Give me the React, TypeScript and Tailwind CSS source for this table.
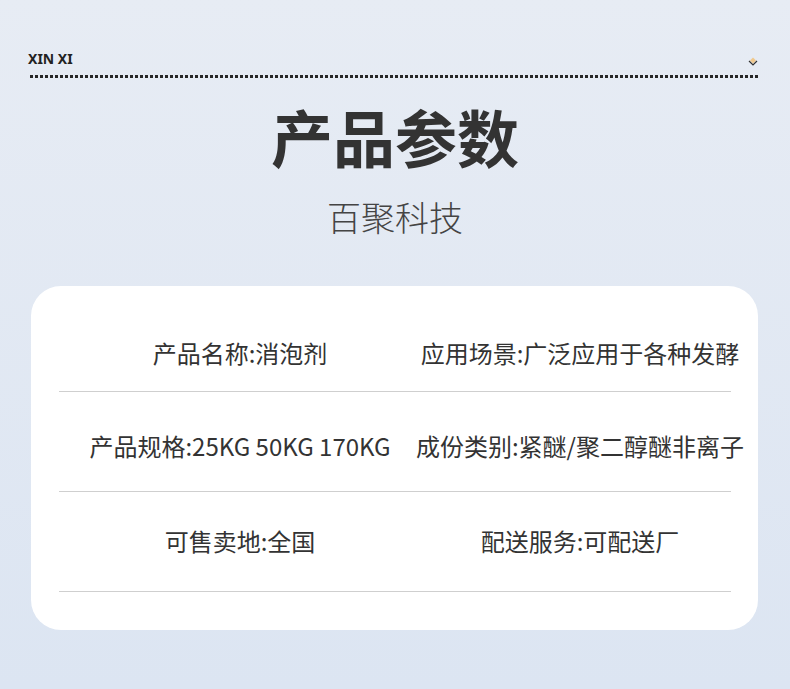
import React from "react";

const cjk = { fontFamily: '"Noto Sans CJK SC", "Noto Sans", sans-serif' };

function Row({ left, right, pt, pb }: { left: string; right: string; pt: string; pb: string }) {
  return (
    <div className={`flex border-b border-[#cfcfcf] ${pt} ${pb}`}>
      <div className="w-[362px] shrink-0 flex justify-center whitespace-nowrap text-[24px] leading-[32px] text-[#333333]">
        {left}
      </div>
      <div className="w-[318px] shrink-0 flex justify-center whitespace-nowrap text-[24px] leading-[32px] text-[#333333]">
        {right}
      </div>
    </div>
  );
}

export default function App() {
  return (
    <div
      className="w-[790px] h-[689px] overflow-hidden bg-gradient-to-b from-[#e7ecf4] to-[#dce5f2] flex flex-col"
      style={cjk}
    >
      <div className="pt-[51px] pl-[28px] pr-[31px]">
        <div className="flex items-end justify-between h-[16px]">
          <span
            className="text-[14px] leading-[16px] font-bold text-[#222]"
            style={{ fontFamily: '"Noto Sans", sans-serif' }}
          >
            XIN XI
          </span>
          <svg width="12" height="12" viewBox="0 0 12 12" className="mb-[-1px]">
            <path d="M6 1.5 L9 4.5 L6 7.5 L3 4.5 Z" fill="#f1c27a" opacity="0.85" />
            <path d="M2 5 L6 9 L10 5" fill="none" stroke="#333" strokeWidth="1.2" />
          </svg>
        </div>
        <div className="mt-[8px] ml-[2px] h-[3px] bg-[repeating-linear-gradient(90deg,#262626_0_3px,transparent_3px_5px)]" />
      </div>

      <div className="mt-[27px] text-center text-[62px] leading-[62px] font-bold text-[#333333]">
        产品参数
      </div>
      <div className="mt-[33px] text-center text-[34px] leading-[34px] font-light text-[#444444]">
        百聚科技
      </div>

      <div className="mt-[52px] mx-[31px] w-[727px] bg-white rounded-[30px] pl-[28px] pr-[27px] pb-[38px]">
        <Row left="产品名称:消泡剂" right="应用场景:广泛应用于各种发酵" pt="pt-[51px]" pb="pb-[22px]" />
        <Row left="产品规格:25KG 50KG 170KG" right="成份类别:紧醚/聚二醇醚非离子" pt="pt-[38px]" pb="pb-[29px]" />
        <Row left="可售卖地:全国" right="配送服务:可配送厂" pt="pt-[33px]" pb="pb-[34px]" />
      </div>
    </div>
  );
}
